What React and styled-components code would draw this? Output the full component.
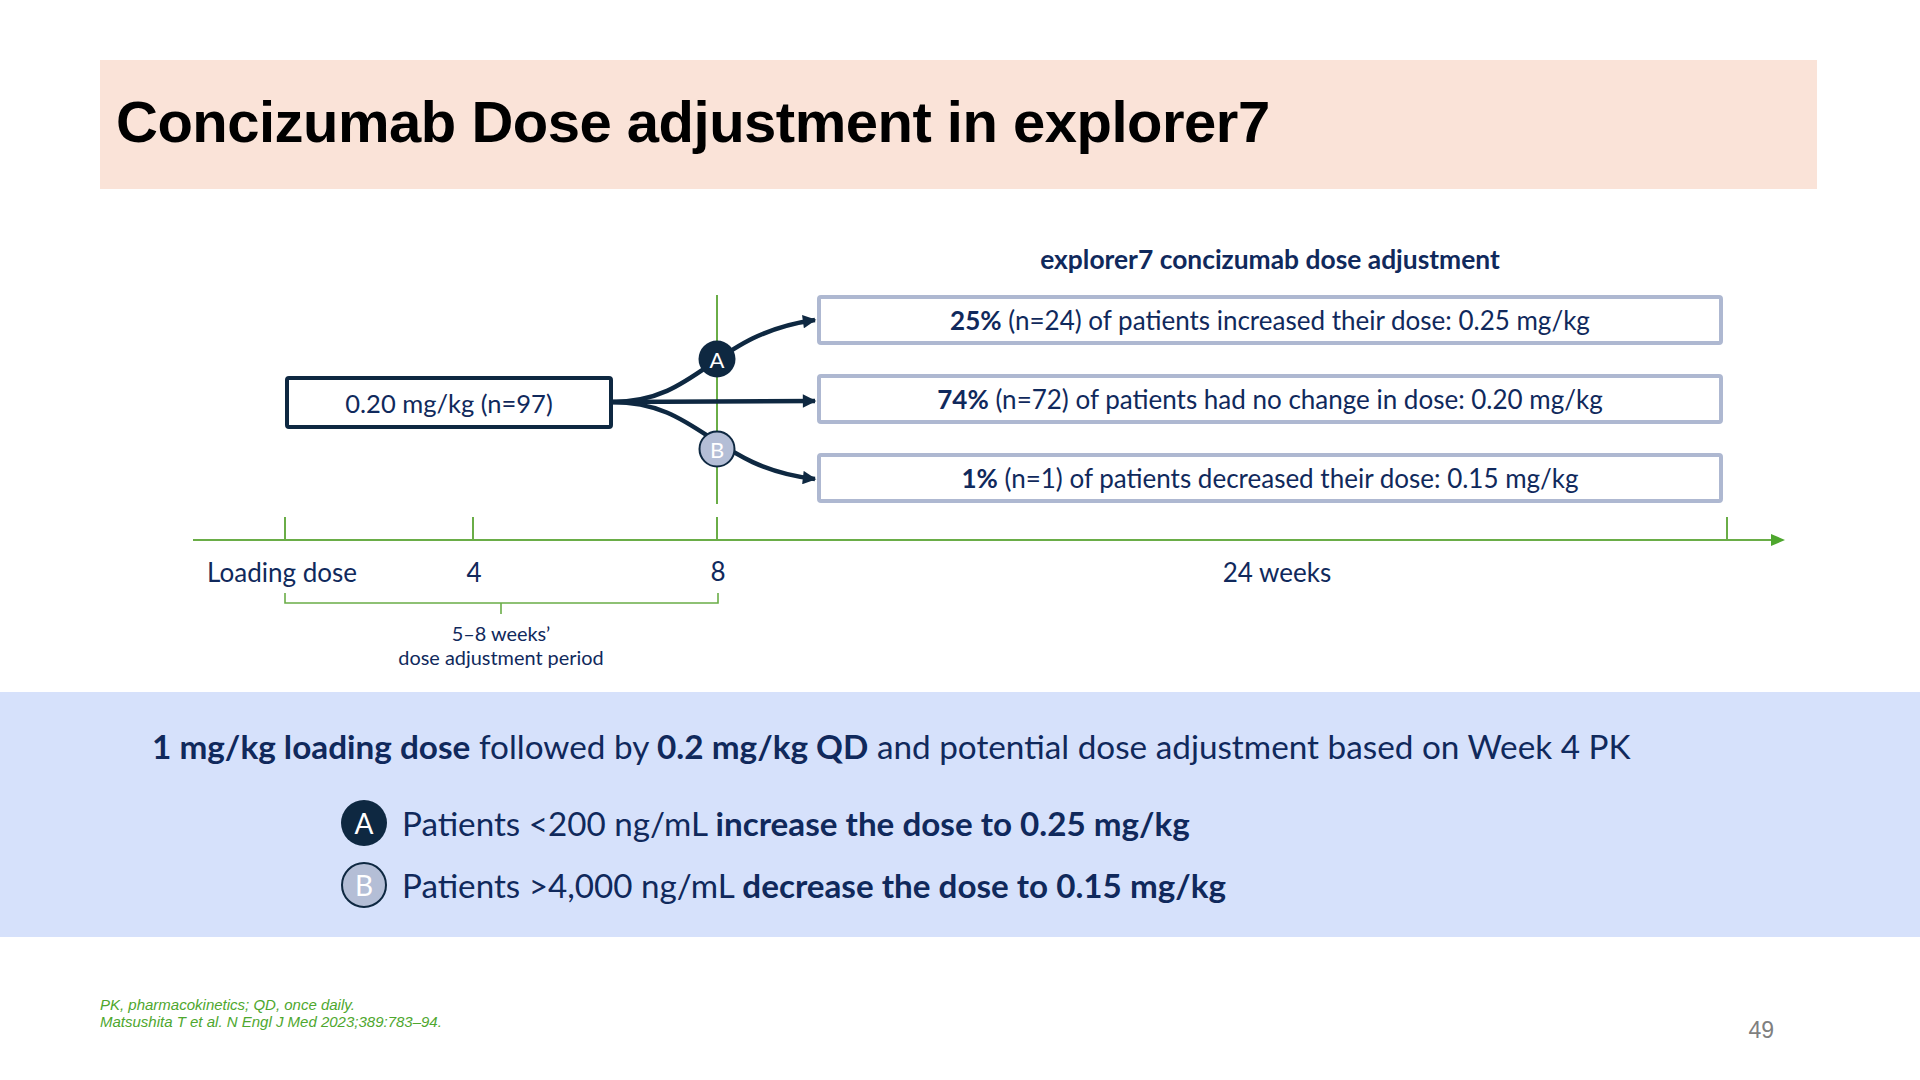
import React from "react";
import styled, { createGlobalStyle } from "styled-components";

const GlobalStyle = createGlobalStyle`
  html, body {
    margin: 0;
    padding: 0;
    background: #ffffff;
  }
  body {
    font-family: Lato, "Liberation Sans", sans-serif;
  }
`;

const NAVY = "#0e2841";
const TEXT = "#10295c";
const GREEN = "#6aad47";

const Slide = styled.div`
  width: 1920px;
  height: 1080px;
  display: flex;
  flex-direction: column;
  overflow: hidden;
  background: #fff;
`;

const TitleBand = styled.header`
  margin: 60px 0 0 100px;
  width: 1717px;
  height: 129px;
  box-sizing: border-box;
  background: #fae3d8;
  display: flex;
  align-items: center;
  padding: 0 0 6px 16px;
`;

const Title = styled.h1`
  margin: 0;
  font-family: "Liberation Sans", Arial, sans-serif;
  font-weight: 700;
  font-size: 58px;
  letter-spacing: -0.5px;
  color: #000;
`;

const Diagram = styled.section`
  position: relative;
  height: 503px;
`;

const Canvas = styled.svg`
  position: absolute;
  left: 0;
  top: 0;
`;

/* text and nodes placed on the diagram canvas, centred on $x/$y */
const Label = styled.div`
  position: absolute;
  left: ${(p) => p.$x}px;
  top: ${(p) => p.$y}px;
  transform: translate(-50%, -50%);
  white-space: nowrap;
  text-align: center;
  color: ${TEXT};
  font-size: ${(p) => p.$size || 26}px;
  font-weight: ${(p) => (p.$bold ? 700 : 400)};
  line-height: ${(p) => p.$lh || 1.2};
`;

const StartBox = styled.div`
  position: absolute;
  left: 285px;
  top: 187px;
  width: 328px;
  height: 53px;
  box-sizing: border-box;
  border: 4px solid ${NAVY};
  border-radius: 4px;
  display: flex;
  align-items: center;
  justify-content: center;
  color: ${TEXT};
  font-size: 25.5px;
  background: #fff;
`;

const OutcomeList = styled.div`
  position: absolute;
  left: 817px;
  top: 106px;
  width: 906px;
  display: flex;
  flex-direction: column;
  gap: 29px;
`;

const OutcomeBox = styled.div`
  height: 50px;
  box-sizing: border-box;
  border: 4px solid #aeb8d1;
  border-radius: 4px;
  display: flex;
  align-items: center;
  justify-content: center;
  color: ${TEXT};
  font-size: 26px;
  background: #fff;

  b {
    font-weight: 700;
  }
`;

const Badge = styled.span`
  display: inline-flex;
  align-items: center;
  justify-content: center;
  flex: none;
  box-sizing: border-box;
  width: ${(p) => p.$d}px;
  height: ${(p) => p.$d}px;
  border-radius: 50%;
  background: ${(p) => (p.$light ? "#b4bed6" : NAVY)};
  border: ${(p) => (p.$light ? `2px solid ${NAVY}` : "none")};
  color: #fff;
  font-size: ${(p) => Math.round(p.$d * 0.6)}px;
  line-height: 1;
`;

const InfoBand = styled.section`
  height: 245px;
  box-sizing: border-box;
  background: #d6e1fb;
  padding: 33px 0 0 152px;
  color: ${TEXT};
`;

const Lead = styled.p`
  margin: 0;
  font-size: 33.3px;
  line-height: 42px;

  b {
    font-weight: 700;
  }
`;

const Bullets = styled.ul`
  list-style: none;
  margin: 31px 0 0 189px;
  padding: 0;
  display: flex;
  flex-direction: column;
  gap: 12px;
`;

const Bullet = styled.li`
  height: 50px;
  display: flex;
  align-items: center;
  gap: 15px;
  font-size: 33.2px;

  b {
    font-weight: 700;
  }
`;

const Footer = styled.footer`
  flex: 1;
  display: flex;
  justify-content: space-between;
  align-items: flex-start;
  padding: 59px 146px 0 100px;
`;

const Notes = styled.div`
  font-family: "Liberation Sans", Arial, sans-serif;
  font-style: italic;
  font-size: 15px;
  line-height: 17px;
  color: #4ea72e;
`;

const PageNo = styled.div`
  margin-top: 23px;
  font-family: "Liberation Sans", Arial, sans-serif;
  font-size: 23px;
  line-height: 23px;
  color: #7f7f7f;
`;

const ticks = [285, 473, 717, 1727];

function Connectors() {
  return (
    <Canvas width="1920" height="503" viewBox="0 0 1920 503">
      <defs>
        <marker
          id="head"
          viewBox="0 0 10 10"
          refX="9"
          refY="5"
          markerWidth="3.2"
          markerHeight="3"
          orient="auto"
          markerUnits="strokeWidth"
        >
          <path d="M0,0 L10,5 L0,10 z" fill={NAVY} />
        </marker>
      </defs>

      {/* week 8 decision line */}
      <line x1="717" y1="106" x2="717" y2="315" stroke={GREEN} strokeWidth="2" />

      {/* time axis */}
      <line x1="193" y1="351" x2="1772" y2="351" stroke={GREEN} strokeWidth="2" />
      <path d="M1771,345 L1785,351 L1771,357 z" fill="#4ea72e" />
      {ticks.map((x) => (
        <line key={x} x1={x} y1="328" x2={x} y2="351" stroke={GREEN} strokeWidth="2" />
      ))}

      {/* adjustment period bracket */}
      <path d="M285,404 V414 H718 V404" fill="none" stroke={GREEN} strokeWidth="1.6" />
      <line x1="501" y1="414" x2="501" y2="425" stroke={GREEN} strokeWidth="1.6" />

      {/* branches */}
      <g fill="none" stroke={NAVY} strokeWidth="4.5" markerEnd="url(#head)">
        <path d="M612,213 C700,213 712,145 815,131" />
        <path d="M612,213 L815,212" />
        <path d="M612,213 C700,213 712,278 815,290" />
      </g>
    </Canvas>
  );
}

export default function App() {
  return (
    <>
      <GlobalStyle />
      <Slide>
        <TitleBand>
          <Title>Concizumab Dose adjustment in explorer7</Title>
        </TitleBand>

        <Diagram>
          <Connectors />

          <Label $x={1270} $y={71} $bold $size={26.4}>
            explorer7 concizumab dose adjustment
          </Label>

          <StartBox>0.20 mg/kg (n=97)</StartBox>

          <OutcomeList>
            <OutcomeBox>
              <span>
                <b>25%</b> (n=24) of patients increased their dose: 0.25 mg/kg
              </span>
            </OutcomeBox>
            <OutcomeBox>
              <span>
                <b>74%</b> (n=72) of patients had no change in dose: 0.20 mg/kg
              </span>
            </OutcomeBox>
            <OutcomeBox>
              <span>
                <b>1%</b> (n=1) of patients decreased their dose: 0.15 mg/kg
              </span>
            </OutcomeBox>
          </OutcomeList>

          <Label $x={717} $y={170}>
            <Badge $d={37}>A</Badge>
          </Label>
          <Label $x={717} $y={260}>
            <Badge $d={37} $light>
              B
            </Badge>
          </Label>

          <Label $x={282} $y={384}>Loading dose</Label>
          <Label $x={474} $y={384}>4</Label>
          <Label $x={718} $y={383}>8</Label>
          <Label $x={1277} $y={384}>24 weeks</Label>

          <Label $x={501} $y={456} $size={19.9} $lh={1.22}>
            5–8 weeks’
            <br />
            dose adjustment period
          </Label>
        </Diagram>

        <InfoBand>
          <Lead>
            <b>1 mg/kg loading dose</b> followed by <b>0.2 mg/kg QD</b> and potential dose
            adjustment based on Week 4 PK
          </Lead>
          <Bullets>
            <Bullet>
              <Badge $d={46}>A</Badge>
              <span>
                Patients &lt;200 ng/mL <b>increase the dose to 0.25 mg/kg</b>
              </span>
            </Bullet>
            <Bullet>
              <Badge $d={46} $light>
                B
              </Badge>
              <span>
                Patients &gt;4,000 ng/mL <b>decrease the dose to 0.15 mg/kg</b>
              </span>
            </Bullet>
          </Bullets>
        </InfoBand>

        <Footer>
          <Notes>
            PK, pharmacokinetics; QD, once daily.
            <br />
            Matsushita T et al. N Engl J Med 2023;389:783–94.
          </Notes>
          <PageNo>49</PageNo>
        </Footer>
      </Slide>
    </>
  );
}
